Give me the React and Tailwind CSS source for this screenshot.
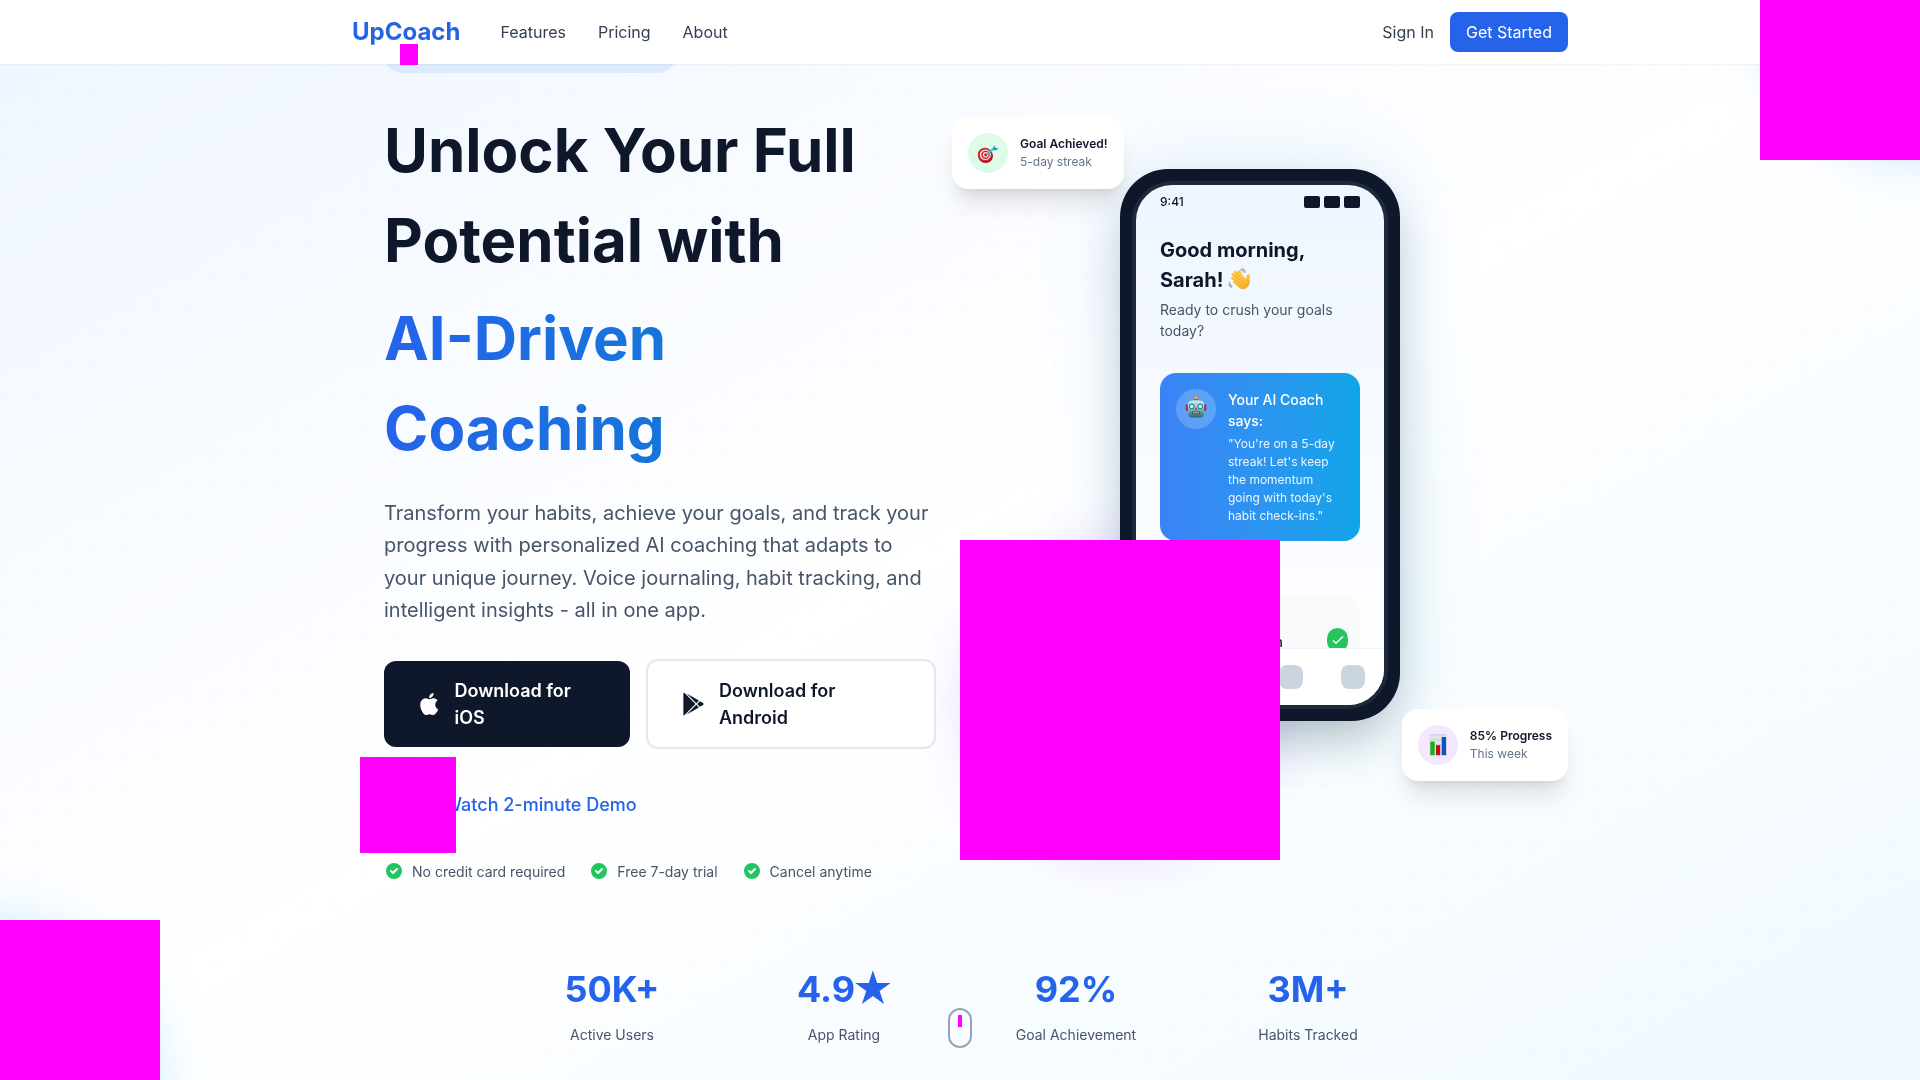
import React from "react";

function CheckBadge() {
  return (
    <svg className="w-5 h-5 shrink-0" fill="#22c55e" viewBox="0 0 20 20">
      <path
        fillRule="evenodd"
        clipRule="evenodd"
        d="M10 18a8 8 0 100-16 8 8 0 000 16zm3.707-9.293a1 1 0 00-1.414-1.414L9 10.586 7.707 9.293a1 1 0 00-1.414 1.414l2 2a1 1 0 001.414 0l4-4z"
      />
    </svg>
  );
}

function DartIcon() {
  return (
    <svg className="w-[22px] h-[22px]" viewBox="0 0 22 22">
      <ellipse cx="8.6" cy="14" rx="7.4" ry="7" fill="#8f1620" />
      <ellipse cx="8" cy="12.8" rx="7.2" ry="7" fill="#d3202c" />
      <ellipse cx="8.3" cy="12.8" rx="5.5" ry="5.3" fill="#f6eaea" />
      <ellipse cx="8.5" cy="12.8" rx="4.3" ry="4.1" fill="#cf1f2b" />
      <ellipse cx="8.7" cy="12.8" rx="2.9" ry="2.8" fill="#f6eaea" />
      <ellipse cx="8.8" cy="12.8" rx="1.7" ry="1.6" fill="#c41c28" />
      <path d="M9 12.6L12 10" stroke="#b98a3e" strokeWidth="1.2" />
      <path d="M11.6 10.6L17 6.6" stroke="#35c6dc" strokeWidth="2.3" strokeLinecap="round" />
      <path d="M15.6 6.4L17.6 3.2L18.2 5.8L21.6 6.6L18.8 8.4L16.4 8Z" fill="#3d98a8" />
    </svg>
  );
}

function RobotIcon() {
  return (
    <svg className="w-[22px] h-[22px]" viewBox="0 0 22 22">
      <defs>
        <linearGradient id="robotFace" x1="0" y1="0" x2="0" y2="1">
          <stop offset="0" stopColor="#d5eeee" />
          <stop offset="0.5" stopColor="#86b9bb" />
          <stop offset="1" stopColor="#26686f" />
        </linearGradient>
      </defs>
      <rect x="9.2" y="2.6" width="3.6" height="3.4" rx="1" fill="#7e3f4a" />
      <circle cx="11" cy="1.8" r="1.8" fill="#f0a82a" />
      <rect x="0.7" y="8.6" width="2.4" height="6.2" rx="1" fill="#a02c3f" />
      <rect x="18.9" y="8.6" width="2.4" height="6.2" rx="1" fill="#a02c3f" />
      <path d="M4.5 5.2Q11 3.4 17.5 5.2Q19.4 6.4 19.3 11L18.6 18.6Q18.3 21.4 15.5 21.4H6.5Q3.7 21.4 3.4 18.6L2.7 11Q2.6 6.4 4.5 5.2Z" fill="url(#robotFace)" />
      <circle cx="6.8" cy="10.4" r="2.8" fill="#1e8f9c" />
      <circle cx="15.2" cy="10.4" r="2.8" fill="#1e8f9c" />
      <circle cx="6.8" cy="10.4" r="1.7" fill="#e3fbfb" />
      <circle cx="15.2" cy="10.4" r="1.7" fill="#e3fbfb" />
      <path d="M11 11.2L12.6 14H9.4Z" fill="#d9344a" />
      <rect x="6.8" y="15.6" width="8.4" height="2.2" rx="0.8" fill="#4b3a3e" />
      <path d="M8 16.7H14" stroke="#e7c9b4" strokeWidth="1.2" strokeDasharray="1.4 0.8" />
    </svg>
  );
}

function ChartIcon() {
  return (
    <svg className="w-[22px] h-[22px]" viewBox="0 0 22 22">
      <rect x="2.6" y="0.4" width="17.2" height="21" fill="#dfe3ea" />
      <path d="M2.6 0.8H19.8M2.6 6H19.8M2.6 11H19.8" stroke="#c4cad4" strokeWidth="0.8" />
      <rect x="3.3" y="7.6" width="4.4" height="13.6" fill="#12b31a" />
      <rect x="9" y="11.2" width="4.2" height="10" fill="#c80a12" />
      <rect x="14.7" y="3" width="4.4" height="18.2" fill="#0b55bd" />
    </svg>
  );
}

function WaveIcon() {
  return (
    <svg className="inline-block align-top w-[23px] h-[23px] mt-[3px]" viewBox="0 0 23 23">
      <defs>
        <linearGradient id="waveHand" x1="0" y1="0" x2="0.6" y2="1">
          <stop offset="0" stopColor="#ffd75a" />
          <stop offset="1" stopColor="#f5a91c" />
        </linearGradient>
      </defs>
      <g stroke="#fdc63c" strokeLinecap="round" strokeWidth="3.1">
        <path d="M12.6 12.8L5.1 6.4" />
        <path d="M13 11L7.6 4.1" />
        <path d="M14.6 10.2L11.2 3.8" />
        <path d="M10.6 14.6L4.6 10" />
      </g>
      <path d="M7 12.4L14.6 7.6Q17.2 11.2 18 10.4Q18.4 8.2 19.4 6.6Q21.4 5.2 21.8 7.4Q21.4 10 21.8 13Q22 17.4 19 19.6Q15.4 22.6 11.8 20.2Q8.6 17.6 5.2 14.8Q4.6 12.4 7 12.4Z" fill="url(#waveHand)" />
      <path d="M6.4 7.8L11 11.8M9 5.8L12.8 10.2M6.2 11.6L9.8 14.4" stroke="#dd9420" strokeWidth="0.6" strokeLinecap="round" />
      <path d="M12.6 1.4Q15.2 2 16 4.6M14.6 0.8Q17 2 17.4 4M1.2 14.2Q1.6 17 4.2 18.2M0.8 16.6Q1.8 18.8 3.4 19.4" fill="none" stroke="#a3a6ac" strokeWidth="1.1" strokeLinecap="round" />
    </svg>
  );
}

function Nav() {
  return (
    <nav className="absolute top-0 inset-x-0 z-40 h-16 bg-white shadow-[0_1px_2px_0_rgba(0,0,0,0.05)]">
      <div className="max-w-7xl mx-auto px-8 h-full flex items-center justify-between">
        <div className="flex items-center">
          <span className="text-[24px] leading-8 font-bold text-[#2563eb]">UpCoach</span>
          <div className="ml-10 flex gap-8 text-[16px] leading-6 text-[#334155]">
            <span>Features</span>
            <span>Pricing</span>
            <span>About</span>
          </div>
        </div>
        <div className="flex items-center gap-4 text-[16px] leading-6">
          <span className="text-[#334155]">Sign In</span>
          <span className="bg-[#2563eb] text-white px-4 py-2 rounded-lg">Get Started</span>
        </div>
      </div>
    </nav>
  );
}

function Backdrop() {
  return (
    <div className="absolute inset-0 overflow-hidden">
      <svg className="absolute inset-0 w-full h-full" fill="none">
        <defs>
          <pattern id="plus" width="30" height="30" patternUnits="userSpaceOnUse">
            <path d="M6 4V0H4v4H0v2h4v4h2V6h4V4H6z" fill="#2563eb" fillOpacity="0.007" />
          </pattern>
        </defs>
        <rect width="100%" height="100%" fill="url(#plus)" />
      </svg>
      <div className="absolute -top-40 -right-40 w-80 h-80 rounded-full bg-[#bfdbfe] mix-blend-multiply blur-xl opacity-70" />
      <div className="absolute -bottom-40 -left-40 w-80 h-80 rounded-full bg-[#bae6fd] mix-blend-multiply blur-xl opacity-70" />
      <div className="absolute top-1/2 left-1/2 w-80 h-80 rounded-full bg-[#e9d5ff] mix-blend-multiply blur-xl opacity-70" />
    </div>
  );
}

function Copy() {
  return (
    <div className="w-[552px]">
      <div className="h-9 w-[292px] rounded-full bg-[#dbeafe] mb-8" />
      <h1 className="text-[60px] leading-[90px] font-bold text-[#0f172a] mb-6">
        Unlock Your Full Potential with
        <span className="block mt-2 bg-gradient-to-r from-[#2563eb] to-[#0284c7] bg-clip-text text-transparent">
          AI-Driven Coaching
        </span>
      </h1>
      <p className="text-[20px] leading-[32.5px] text-[#475569] mb-8">
        Transform your habits, achieve your goals, and track your progress with personalized AI
        coaching that adapts to your unique journey. Voice journaling, habit tracking, and
        intelligent insights - all in one app.
      </p>
      <div className="flex items-center gap-4 mb-8 text-[18px] leading-[27px] font-semibold">
        <div className="w-[246px] h-[86px] rounded-xl bg-[#0f172a] text-white flex items-center px-8">
          <svg className="w-[26.5px] h-7 mr-3 shrink-0" viewBox="0 0 24 24" fill="currentColor">
            <path d="M18.71 19.5c-.83 1.24-1.71 2.45-3.05 2.47-1.34.03-1.77-.79-3.29-.79-1.53 0-2 .77-3.27.82-1.31.05-2.3-1.32-3.14-2.53C4.25 17 2.94 12.45 4.7 9.39c.87-1.52 2.43-2.48 4.12-2.51 1.28-.02 2.5.87 3.29.87.78 0 2.26-1.07 3.81-.91.65.03 2.47.26 3.64 1.98-.09.06-2.17 1.28-2.15 3.81.03 3.02 2.65 4.03 2.68 4.04-.03.07-.42 1.44-1.38 2.83M13 3.5c.73-.83 1.94-1.46 2.94-1.5.13 1.17-.34 2.35-1.04 3.19-.69.85-1.83 1.51-2.95 1.42-.15-1.15.41-2.35 1.05-3.11z" />
          </svg>
          <span>Download for<br />iOS</span>
        </div>
        <div className="w-[290px] h-[90px] rounded-xl bg-white border-2 border-[#e2e8f0] text-[#0f172a] flex items-center px-8">
          <svg className="w-[27px] h-7 mr-3 shrink-0" viewBox="0 0 24 24" fill="currentColor">
            <path d="M3.609 1.814L13.792 12 3.61 22.186a.996.996 0 01-.61-.92V2.734a1 1 0 01.609-.92zm10.89 10.893l2.302 2.302-10.937 6.333 8.635-8.635zm3.199-3.198l2.807 1.626a1 1 0 010 1.73l-2.808 1.626L15.206 12l2.492-2.491zM5.864 2.658L16.802 8.99l-2.303 2.303-8.635-8.635z" />
          </svg>
          <span>Download for<br />Android</span>
        </div>
      </div>
      <div className="relative flex items-center gap-3 h-12 mb-8 text-[18px] leading-[27px] font-medium text-[#2563eb]">
        <div className="w-12 h-12" />
        <span>Watch 2-minute Demo</span>
        <div className="absolute -left-6 -top-6 w-24 h-24 bg-[#ff00ff]" />
      </div>
      <div className="flex items-center gap-6 text-[14px] leading-[21px] text-[#475569]">
        {["No credit card required", "Free 7-day trial", "Cancel anytime"].map((t) => (
          <div key={t} className="flex items-center gap-2 whitespace-nowrap">
            <CheckBadge />
            <span>{t}</span>
          </div>
        ))}
      </div>
    </div>
  );
}

function FloatCard({ icon, tint, title, note, place }) {
  return (
    <div className={"absolute z-10 flex items-center gap-3 p-4 rounded-2xl bg-white whitespace-nowrap shadow-[0_20px_25px_-5px_rgba(0,0,0,0.1),0_8px_10px_-6px_rgba(0,0,0,0.1)] " + place}>
      <div className={"w-10 h-10 rounded-full flex items-center justify-center " + tint}>{icon}</div>
      <div className="text-[12px] leading-[18px]">
        <p className="font-semibold text-[#0f172a]">{title}</p>
        <p className="text-[#64748b]">{note}</p>
      </div>
    </div>
  );
}

function Phone() {
  return (
    <div className="relative w-[280px] h-[552px] rounded-[48px] bg-[#0f172a] p-3 shadow-[0_25px_50px_-12px_rgba(0,0,0,0.25)]">
      <div className="h-full rounded-[40px] border-4 border-[#1e293b] overflow-hidden flex flex-col bg-gradient-to-b from-[#eff6ff] to-white">
        <div className="flex justify-between items-center px-6 py-2 text-[12px] leading-[18px] font-medium text-[#0f172a]">
          <span>9:41</span>
          <div className="flex gap-1">
            <div className="w-4 h-3 rounded-xs bg-[#0f172a]" />
            <div className="w-4 h-3 rounded-xs bg-[#0f172a]" />
            <div className="w-4 h-3 rounded-xs bg-[#0f172a]" />
          </div>
        </div>
        <div className="flex-1 min-h-0 overflow-hidden px-6 pt-4">
          <h3 className="text-[20px] leading-[30px] font-bold text-[#0f172a]">
            Good morning, <br />
            Sarah! <WaveIcon />
          </h3>
          <p className="mt-1 text-[14px] leading-[21px] text-[#475569]">Ready to crush your goals today?</p>
          <div className="mt-8 flex items-start gap-3 p-4 rounded-2xl bg-gradient-to-r from-[#3b82f6] to-[#0ea5e9] text-white">
            <div className="w-10 h-10 shrink-0 rounded-full bg-white/20 flex items-center justify-center pb-[3px]">
              <RobotIcon />
            </div>
            <div>
              <p className="text-[14px] leading-[21px] font-medium">Your AI Coach says:</p>
              <p className="mt-1 text-[12px] leading-[18px] opacity-90">
                "You're on a 5-day streak! Let's keep the momentum going with today's habit check-ins."
              </p>
            </div>
          </div>
          <div className="mt-6 h-[21px]" />
          <div className="mt-3 flex items-center p-3 rounded-xl bg-[#f8fafc]">
            <div className="flex-1 h-[60px] pt-[21px] pr-[44px] text-right text-[14px] leading-[21px] font-medium text-[#0f172a]">n</div>
            <div className="w-[21px] h-6 rounded-full bg-[#22c55e] flex items-center justify-center">
              <svg className="w-4 h-4" viewBox="0 0 24 24" fill="none" stroke="white" strokeWidth="2" strokeLinecap="round" strokeLinejoin="round">
                <path d="M5 13l4 4L19 7" />
              </svg>
            </div>
          </div>
        </div>
        <div className="flex justify-around py-4 bg-white border-t border-[#f1f5f9]">
          <div className="w-6 h-6 rounded-lg bg-[#2563eb]" />
          <div className="w-6 h-6 rounded-lg bg-[#cbd5e1]" />
          <div className="w-6 h-6 rounded-lg bg-[#cbd5e1]" />
          <div className="w-6 h-6 rounded-lg bg-[#cbd5e1]" />
        </div>
      </div>
    </div>
  );
}

const stats = [
  ["50K+", "Active Users"],
  ["4.9★", "App Rating"],
  ["92%", "Goal Achievement"],
  ["3M+", "Habits Tracked"],
];

function StatValue({ value }) {
  if (!value.endsWith("★")) return value;
  return (
    <>
      {value.slice(0, -1)}
      <span className="relative top-[2px] inline-flex w-[36px] justify-center text-[41px] leading-none">★</span>
    </>
  );
}

export default function App() {
  return (
    <div className="relative w-[1920px] h-[1080px] overflow-hidden bg-gradient-to-br from-[#eff6ff] via-white to-[#f0f9ff] font-['Inter',sans-serif]">
      <Backdrop />
      <Nav />
      <main className="relative w-[1152px] mx-auto pt-[36.6px]">
        <div className="grid grid-cols-2 gap-12">
          <Copy />
          <div className="relative flex justify-center items-start pt-[132.4px]">
            <div className="relative">
              <div className="absolute inset-0 rounded-[48px] bg-gradient-to-br from-[#60a5fa] to-[#06a5d4] blur-[40px] opacity-20" />
              <Phone />
            </div>
            <FloatCard icon={<DartIcon />} tint="bg-[#dcfce7]" title="Goal Achieved!" note="5-day streak" place="-left-8 top-[80.4px]" />
            <FloatCard icon={<ChartIcon />} tint="bg-[#f3e8ff]" title="85% Progress" note="This week" place="-right-8 top-[672.4px]" />
          </div>
        </div>
        <div className="mt-20 max-w-4xl mx-auto grid grid-cols-4 gap-8 text-center">
          {stats.map(([value, label]) => (
            <div key={label}>
              <div className="h-[54px] text-[36px] leading-[54px] font-bold text-[#2563eb] mb-2">
                <StatValue value={value} />
              </div>
              <div className="text-[14px] leading-[21px] text-[#475569]">{label}</div>
            </div>
          ))}
        </div>
      </main>
      <div className="absolute left-[948px] top-[1008px] w-6 h-10 rounded-full border-2 border-[#94a3b8] flex justify-center pt-[5px]">
        <div className="w-1 h-3 bg-[#ff00ff]" />
      </div>
      <div className="absolute z-50 left-[400px] top-[44px] w-[18px] h-[21px] bg-[#ff00ff]" />
      <div className="absolute z-50 right-0 top-0 w-40 h-40 bg-[#ff00ff]" />
      <div className="absolute z-50 left-0 bottom-0 w-40 h-40 bg-[#ff00ff]" />
      <div className="absolute z-50 left-[960px] top-[540px] w-80 h-80 bg-[#ff00ff]" />
    </div>
  );
}
